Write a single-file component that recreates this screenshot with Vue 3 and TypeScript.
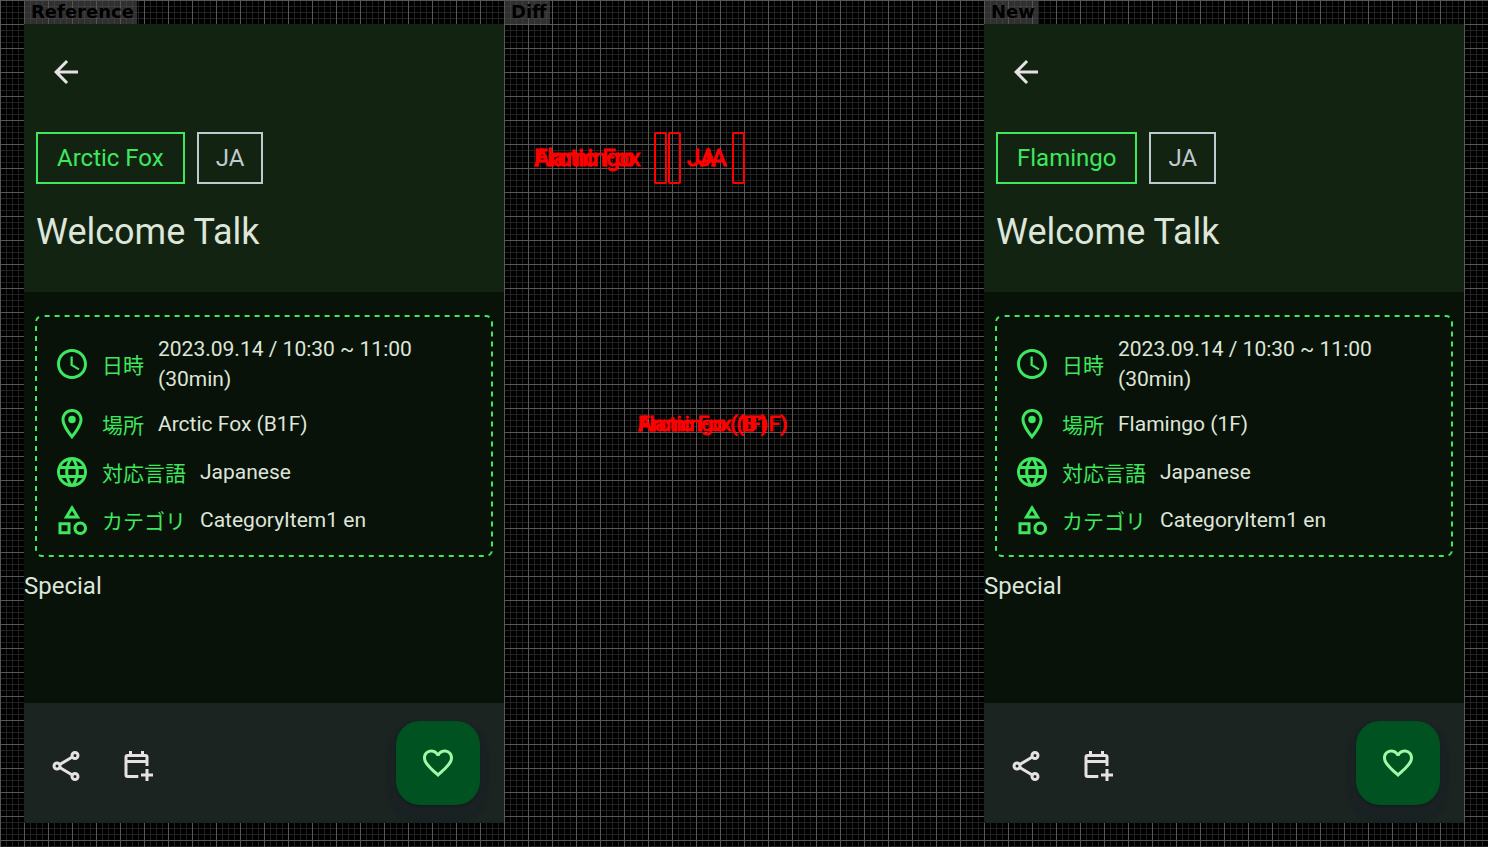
<script setup lang="ts">
interface Session {
  label: string
  room: string
  floor: string
}

interface InfoRow {
  icon: 'clock' | 'pin' | 'globe' | 'category'
  name: string
  value: string
}

const before: Session = { label: 'Reference', room: 'Arctic Fox', floor: 'B1F' }
const after: Session = { label: 'New', room: 'Flamingo', floor: '1F' }

const columns: { label: string; session: Session | null }[] = [
  { label: before.label, session: before },
  { label: 'Diff', session: null },
  { label: after.label, session: after },
]

const place = (s: Session): string => `${s.room} (${s.floor})`

const rows = (s: Session): InfoRow[] => [
  { icon: 'clock', name: '日時', value: '2023.09.14 / 10:30 ~ 11:00 (30min)' },
  { icon: 'pin', name: '場所', value: place(s) },
  { icon: 'globe', name: '対応言語', value: 'Japanese' },
  { icon: 'category', name: 'カテゴリ', value: 'CategoryItem1 en' },
]

const icons: Record<InfoRow['icon'], string> = {
  clock:
    'M11.99 2C6.47 2 2 6.48 2 12s4.47 10 9.99 10C17.52 22 22 17.52 22 12S17.52 2 11.99 2zM12 20c-4.42 0-8-3.58-8-8s3.58-8 8-8 8 3.58 8 8-3.58 8-8 8zm.5-13H11v6l5.25 3.15.75-1.23-4.5-2.67z',
  pin:
    'M12 2C8.13 2 5 5.13 5 9c0 5.25 7 13 7 13s7-7.75 7-13c0-3.87-3.13-7-7-7zM7 9c0-2.76 2.24-5 5-5s5 2.24 5 5c0 2.88-2.88 7.19-5 9.88C9.92 16.21 7 11.85 7 9zM12 6.5a2.5 2.5 0 1 0 0 5a2.5 2.5 0 1 0 0-5z',
  globe:
    'M11.99 2C6.47 2 2 6.48 2 12s4.47 10 9.99 10C17.52 22 22 17.52 22 12S17.52 2 11.99 2zm6.93 6h-2.95c-.32-1.25-.78-2.45-1.38-3.56 1.84.63 3.37 1.91 4.33 3.56zM12 4.04c.83 1.2 1.48 2.53 1.91 3.96h-3.82c.43-1.43 1.08-2.76 1.91-3.96zM4.26 14C4.1 13.36 4 12.69 4 12s.1-1.36.26-2h3.38c-.08.66-.14 1.32-.14 2s.06 1.34.14 2H4.26zm.82 2h2.95c.32 1.25.78 2.45 1.38 3.56-1.84-.63-3.37-1.9-4.33-3.56zm2.95-8H5.08c.96-1.66 2.49-2.93 4.33-3.56C8.81 5.55 8.35 6.75 8.03 8zM12 19.96c-.83-1.2-1.48-2.53-1.91-3.96h3.82c-.43 1.43-1.08 2.76-1.91 3.96zM14.34 14H9.66c-.09-.66-.16-1.32-.16-2s.07-1.35.16-2h4.68c.09.65.16 1.32.16 2s-.07 1.34-.16 2zm.25 5.56c.6-1.11 1.06-2.31 1.38-3.56h2.95c-.96 1.65-2.49 2.93-4.33 3.56zM16.36 14c.08-.66.14-1.32.14-2s-.06-1.34-.14-2h3.38c.16.64.26 1.31.26 2s-.1 1.36-.26 2h-3.38z',
  category:
    'M12 2l-5.5 9h11L12 2zm0 3.84L13.93 9h-3.87L12 5.84zM17.5 13c-2.49 0-4.5 2.01-4.5 4.5s2.01 4.5 4.5 4.5 4.5-2.01 4.5-4.5-2.01-4.5-4.5-4.5zm0 7c-1.38 0-2.5-1.12-2.5-2.5s1.12-2.5 2.5-2.5 2.5 1.12 2.5 2.5-1.12 2.5-2.5 2.5zM3 21.5h8v-8H3v8zm2-6h4v4H5v-4z',
}
</script>

<template>
  <main class="board">
    <section v-for="col in columns" :key="col.label" class="column">
      <h2 class="caption">{{ col.label }}</h2>

      <article v-if="col.session" class="screen">
        <header class="head">
          <button type="button" class="icon-button" aria-label="Back">
            <svg class="icon" viewBox="0 0 24 24">
              <path d="M20 11H7.83l5.59-5.59L12 4l-8 8 8 8 1.41-1.41L7.83 13H20v-2z" />
            </svg>
          </button>
          <div class="chips">
            <span class="chip room">{{ col.session.room }}</span>
            <span class="chip lang">JA</span>
          </div>
          <h1 class="title">Welcome Talk</h1>
        </header>

        <div class="content">
          <div class="card">
            <svg class="dashes" aria-hidden="true">
              <rect width="100%" height="100%" rx="6" />
            </svg>
            <dl class="rows">
              <div v-for="row in rows(col.session)" :key="row.icon" class="row">
                <svg class="icon" viewBox="0 0 24 24" aria-hidden="true">
                  <path :d="icons[row.icon]" />
                </svg>
                <dt>{{ row.name }}</dt>
                <dd>{{ row.value }}</dd>
              </div>
            </dl>
          </div>
          <p class="description">Special</p>
        </div>

        <footer class="bar">
          <div class="actions">
            <button type="button" class="icon-button" aria-label="Share">
              <svg class="icon line" viewBox="0 0 24 24">
                <circle cx="18" cy="5" r="2" />
                <circle cx="6" cy="12" r="2" />
                <circle cx="18" cy="19" r="2" />
                <path d="M7.8 11L16.2 6M7.8 13l8.4 5" />
              </svg>
            </button>
            <button type="button" class="icon-button" aria-label="Add to calendar">
              <svg class="icon line" viewBox="0 0 24 24">
                <path
                  d="M12.2 19H5a1 1 0 0 1-1-1V6a1 1 0 0 1 1-1h12a1 1 0 0 1 1 1v6M4 9h14M7 2v3M15 2v3M18 14v8M14 18h8"
                />
              </svg>
            </button>
          </div>
          <button type="button" class="fab" aria-label="Add to favourites">
            <svg class="icon" viewBox="0 0 24 24">
              <path
                d="M16.5 3c-1.74 0-3.41.81-4.5 2.09C10.91 3.81 9.24 3 7.5 3 4.42 3 2 5.42 2 8.5c0 3.78 3.4 6.86 8.55 11.54L12 21.35l1.45-1.32C18.6 15.36 22 12.28 22 8.5 22 5.42 19.58 3 16.5 3zm-4.4 15.55l-.1.1-.1-.1C7.14 14.24 4 11.39 4 8.5 4 6.5 5.5 5 7.5 5c1.54 0 3.04.99 3.57 2.36h1.87C13.46 5.99 14.96 5 16.5 5c2 0 3.5 1.5 3.5 3.5 0 2.89-3.14 5.74-7.9 10.05z"
              />
            </svg>
          </button>
        </footer>
      </article>

      <div v-else class="diff">
        <div class="diff-chips">
          <div class="diff-room">
            <span v-for="s in [before, after]" :key="s.room" class="layer">{{ s.room }}</span>
          </div>
          <i class="edge"></i>
          <i class="edge next"></i>
          <div class="diff-lang">
            <span class="layer">JA</span>
            <span class="layer shifted">JA</span>
          </div>
          <i class="edge"></i>
        </div>
        <div class="diff-place">
          <span v-for="s in [before, after]" :key="s.room" class="layer">{{ place(s) }}</span>
        </div>
      </div>
    </section>
  </main>
</template>

<style>
body {
  margin: 0;
  background: #000;
}
</style>

<style scoped>
.board {
  box-sizing: border-box;
  min-height: 100vh;
  padding: 0 24px 24px;
  display: grid;
  grid-template-columns: repeat(3, minmax(0, 1fr));
  background-color: #000;
  background-image:
    linear-gradient(#585858 1px, transparent 1px),
    linear-gradient(90deg, #585858 1px, transparent 1px),
    linear-gradient(#222 1px, transparent 1px),
    linear-gradient(90deg, #222 1px, transparent 1px);
  background-size: 24px 24px, 24px 24px, 6px 6px, 6px 6px;
  font-family: Roboto, "Noto Sans CJK JP", sans-serif;
}

.column {
  display: flex;
  flex-direction: column;
  align-items: stretch;
}

.caption {
  align-self: flex-start;
  box-sizing: border-box;
  height: 24px;
  margin: 0;
  padding: 0 3px 0 7px;
  background: rgba(80, 80, 80, 0.6);
  color: #000;
  font: bold 18px/24px "DejaVu Sans", sans-serif;
}

.screen {
  flex: 1;
  display: flex;
  flex-direction: column;
  background: #081208;
  color: #dee5d9;
}

.head {
  background: #122311;
  padding: 12px 12px 36px;
}

.icon-button {
  display: flex;
  align-items: center;
  justify-content: center;
  width: 72px;
  height: 72px;
  padding: 0;
  border: 0;
  background: none;
  color: #e6e1e5;
}

.head .icon-button {
  margin-left: -6px;
}

.icon {
  flex: none;
  display: block;
  width: 36px;
  height: 36px;
  fill: currentColor;
}

.icon.line {
  fill: none;
  stroke: currentColor;
  stroke-width: 2;
}

.chips {
  display: flex;
  gap: 12px;
  margin-top: 24px;
}

.chip {
  border: 2px solid currentColor;
  font-size: 24px;
  line-height: 48px;
  white-space: nowrap;
}

.room {
  padding: 0 19px;
  color: #3fe75f;
}

.lang {
  padding: 0 17px;
  color: #c0c9cd;
}

.title {
  margin: 24px 0 0;
  font-size: 36px;
  font-weight: 400;
  line-height: 48px;
}

.content {
  flex: 1;
  padding-top: 24px;
}

.card {
  position: relative;
  margin: 0 12px;
  padding: 18px;
}

.dashes {
  position: absolute;
  inset: 0;
  width: 100%;
  height: 100%;
  overflow: visible;
  fill: none;
  stroke: #3fe75f;
  stroke-width: 2;
  stroke-dasharray: 5 5;
  stroke-dashoffset: 7.4;
}

.rows {
  margin: 0;
  display: flex;
  flex-direction: column;
  gap: 12px;
}

.row {
  display: flex;
  align-items: center;
  font-size: 21px;
  line-height: 30px;
  color: #3fe75f;
}

.row dt {
  flex: none;
  margin: 0 14px 0 12px;
  padding-top: 4px;
}

.row dd {
  margin: 0;
  color: #dee5d9;
}

.description {
  margin: 12px 0 0;
  font-size: 24px;
  line-height: 36px;
}

.bar {
  display: flex;
  align-items: center;
  justify-content: space-between;
  box-sizing: border-box;
  height: 120px;
  padding: 0 24px 0 6px;
  overflow: hidden;
  background: #1b2421;
}

.actions {
  display: flex;
  padding-top: 6px;
}

.fab {
  display: flex;
  align-items: center;
  justify-content: center;
  width: 84px;
  height: 84px;
  padding: 0;
  border: 0;
  border-radius: 24px;
  background: #005221;
  color: #a2f8a6;
  box-shadow: 0 2px 2px #151d20, 0 9px 3px 8px #192122;
}

.diff {
  color: #f00;
  -webkit-text-stroke: 1px #f00;
}

.diff-chips {
  display: flex;
  padding: 108px 0 0 30px;
  font-size: 24px;
  line-height: 52px;
}

.diff-room,
.diff-lang,
.diff-place {
  display: grid;
  justify-content: start;
  white-space: nowrap;
}

.diff-room {
  width: 120px;
}

.diff-lang {
  box-sizing: border-box;
  width: 51px;
  padding-left: 6px;
}

.edge {
  box-sizing: border-box;
  width: 13px;
  border: 2px solid #f00;
  border-radius: 2px;
}

.edge.next {
  margin-left: 1px;
}

.diff-place {
  padding: 225px 0 0 134px;
  font-size: 21px;
  line-height: 30px;
}

.layer {
  grid-area: 1 / 1;
}

.shifted {
  padding-left: 11px;
}
</style>
